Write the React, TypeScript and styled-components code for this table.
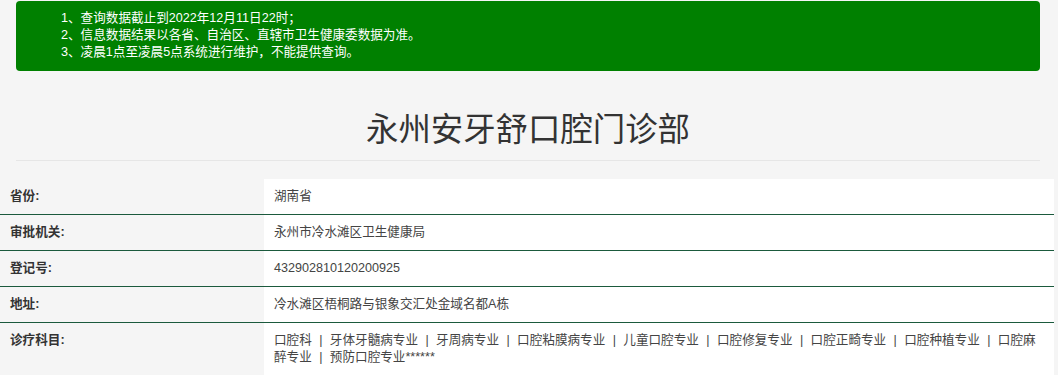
import styled, { createGlobalStyle } from "styled-components"

const GlobalStyle = createGlobalStyle`
	html, body {
		margin: 0;
		padding: 0;
		background: #f5f5f5;
	}
	body {
		font-family: "Liberation Sans", "Noto Sans CJK SC", sans-serif;
		font-size: 12.6px;
		color: #333;
	}
`

const notices = [
	"1、查询数据截止到2022年12月11日22时；",
	"2、信息数据结果以各省、自治区、直辖市卫生健康委数据为准。",
	"3、凌晨1点至凌晨5点系统进行维护，不能提供查询。",
]

const specialties = [
	"口腔科",
	"牙体牙髓病专业",
	"牙周病专业",
	"口腔粘膜病专业",
	"儿童口腔专业",
	"口腔修复专业",
	"口腔正畸专业",
	"口腔种植专业",
	"口腔麻醉专业",
	"预防口腔专业******",
]

const rows = [
	{ label: "省份:", value: "湖南省" },
	{ label: "审批机关:", value: "永州市冷水滩区卫生健康局" },
	{ label: "登记号:", value: "432902810120200925" },
	{ label: "地址:", value: "冷水滩区梧桐路与银象交汇处金域名都A栋" },
]

export default function App() {
	return (
		<Page>
			<GlobalStyle />
			<Inner>
				<Notice>
					{notices.map((n) => (
						<NoticeLine key={n}>{n}</NoticeLine>
					))}
				</Notice>
				<Title>永州安牙舒口腔门诊部</Title>
				<Divider />
			</Inner>
			<InfoTable>
				{rows.map((r) => (
					<Row key={r.label}>
						<Label>{r.label}</Label>
						<Value>{r.value}</Value>
					</Row>
				))}
				<Row $tight>
					<Label>诊疗科目:</Label>
					<SpecialtyValue>{specialties.join(" | ")}</SpecialtyValue>
				</Row>
			</InfoTable>
		</Page>
	)
}

const Page = styled.div`
	width: 1058px;
	padding-top: 1px;
`

const Inner = styled.div`
	padding: 0 18px 0 16px;
`

const Notice = styled.div`
	background: #008000;
	border-radius: 4px;
	padding: 9px 0 10px 45px;
	color: #fff;
`

const NoticeLine = styled.div`
	line-height: 17px;
`

const Title = styled.h1`
	margin: 36px 0 13px;
	font-family: "Noto Sans CJK SC", sans-serif;
	font-size: 32.4px;
	font-weight: 400;
	line-height: 40px;
	text-align: center;
	color: #333;
`

const Divider = styled.div`
	height: 1px;
	background: #e6e6e6;
	margin-bottom: 18px;
`

const InfoTable = styled.div`
	width: 1054px;
`

const Row = styled.div<{ $tight?: boolean }>`
	display: grid;
	grid-template-columns: 264px 1fr;
	line-height: ${(p) => (p.$tight ? "16.5px" : "19px")};
	& + & {
		border-top: 1px solid #1b5a3d;
	}
	& > div {
		padding: ${(p) => (p.$tight ? "9px 10px 20px" : "8px 10px")};
	}
`

const Label = styled.div`
	font-weight: 700;
	color: #333;
`

const Value = styled.div`
	background: #fff;
	color: #444;
`

const SpecialtyValue = styled(Value)`
	word-spacing: 3.9px;
`
